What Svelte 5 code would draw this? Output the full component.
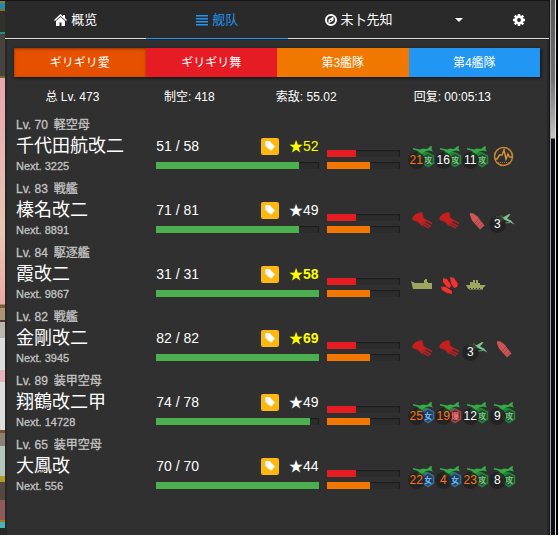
<script>
  const fleets = [
    { name: 'ギリギリ愛', tone: 'orange active' },
    { name: 'ギリギリ舞', tone: 'red' },
    { name: '第3艦隊', tone: 'orange' },
    { name: '第4艦隊', tone: 'blue' },
  ];

  const stats = ['总 Lv. 473', '制空: 418', '索敌: 55.02', '回复: 00:05:13'];

  const attack = (count, full = true) => ({ icon: 'torpedo', mark: '攻', count, full });
  const scout = (count) => ({ icon: 'fighter', mark: '女', count, full: false });
  const bomber = (count) => ({ icon: 'bomber', mark: '爆', count, full: false });

  const ships = [
    {
      level: 70, type: '軽空母', name: '千代田航改二', next: 3225, hp: 51, maxHp: 58,
      cond: 52, glow: 'spark',
      items: [attack(21, false), attack(16), attack(11), { icon: 'sonar' }],
    },
    {
      level: 83, type: '戦艦', name: '榛名改二', next: 8891, hp: 71, maxHp: 81,
      cond: 49, glow: '',
      items: [{ icon: 'gun' }, { icon: 'gun' }, { icon: 'shell' }, { icon: 'seaplane', count: 3, full: true }],
    },
    {
      level: 84, type: '駆逐艦', name: '霞改二', next: 9867, hp: 31, maxHp: 31,
      cond: 58, glow: 'spark strong',
      items: [{ icon: 'boat' }, { icon: 'shells' }, { icon: 'landing' }],
    },
    {
      level: 82, type: '戦艦', name: '金剛改二', next: 3945, hp: 82, maxHp: 82,
      cond: 69, glow: 'spark strong',
      items: [{ icon: 'gun' }, { icon: 'gun' }, { icon: 'seaplane', count: 3, full: true }, { icon: 'shell' }],
    },
    {
      level: 89, type: '装甲空母', name: '翔鶴改二甲', next: 14728, hp: 74, maxHp: 78,
      cond: 49, glow: '',
      items: [scout(25), bomber(19), attack(12), attack(9)],
    },
    {
      level: 65, type: '装甲空母', name: '大鳳改', next: 556, hp: 70, maxHp: 70,
      cond: 44, glow: '',
      items: [scout(22), scout(4), attack(23, false), attack(8)],
    },
  ];

  const fuel = 40;
  const ammo = 60;

  let activeTab = $state('fleet');
</script>

<div class="window">
  <div class="scenery"></div>

  <main>
    <nav>
      <button class:current={activeTab === 'home'} onclick={() => (activeTab = 'home')}>
        <svg width="13" height="12" viewBox="0 0 13 12" aria-hidden="true">
          <path fill="currentColor" d="M6.500 0 0 6l1 1 5.500-5L12 7l1-1-2-2V1H9v1.200zM6.500 3 2 7v5h3.500V8.500h2V12H11V7z" />
        </svg>
        概览
      </button>
      <button class:current={activeTab === 'fleet'} onclick={() => (activeTab = 'fleet')}>
        <svg width="12" height="12" viewBox="0 0 12 12" aria-hidden="true">
          <path fill="currentColor" d="M0 1h12v1.500H0zM0 4h12v1.500H0zM0 7h12v1.500H0zM0 10h12v1.500H0z" />
        </svg>
        舰队
      </button>
      <button class:current={activeTab === 'prophet'} onclick={() => (activeTab = 'prophet')}>
        <svg width="12" height="12" viewBox="0 0 12 12" aria-hidden="true">
          <circle cx="6" cy="6" r="5" fill="none" stroke="currentColor" stroke-width="2" />
          <path fill="currentColor" fill-rule="evenodd" d="M3.500 5.500 8.500 2.500v4L3.500 9.500zM5 6v1.500L7 6z" />
        </svg>
        未卜先知
      </button>
      <button aria-label="More">
        <svg width="8" height="4" viewBox="0 0 8 4" aria-hidden="true"><path fill="currentColor" d="M0 0h8L4 4z" /></svg>
      </button>
      <button aria-label="Settings">
        <svg width="12" height="12" viewBox="0 0 12 12" aria-hidden="true">
          <circle cx="6" cy="6" r="3.300" fill="none" stroke="currentColor" stroke-width="2.800" />
          <path stroke="currentColor" stroke-width="2.400" d="M6 0v2.500M6 9.500V12M0 6h2.500M9.500 6H12M1.700 1.700l1.500 1.500M8.800 8.800l1.500 1.500M1.700 10.300l1.500-1.500M8.800 3.200l1.500-1.500" />
        </svg>
      </button>
    </nav>

    <section class="panel">
      <div class="fleets">
        {#each fleets as fleet}
          <button class={fleet.tone}>{fleet.name}</button>
        {/each}
      </div>

      <div class="stats">
        {#each stats as stat}
          <span>{stat}</span>
        {/each}
      </div>

      {#each ships as ship}
        <div class="ship">
          <div class="info">
            <div class="level"><span>Lv. {ship.level}</span><span>{ship.type}</span></div>
            <span class="name">{ship.name}</span>
            <span class="next">Next. {ship.next}</span>
          </div>

          <div class="health">
            <div class="line">
              <span class="hp">{ship.hp} / {ship.maxHp}</span>
              <button class="tag" aria-label="Tag">
                <svg width="10" height="10" viewBox="0 0 10 10" aria-hidden="true">
                  <path fill="#fff" fill-rule="evenodd" d="M0 1q0-1 1-1h3.500L10 5.500 6 9.700 0 4.500zM2 1.400a.6.600 0 1 0 .1 0z" />
                </svg>
              </button>
              <span class="cond {ship.glow}">★{ship.cond}</span>
            </div>
            <div class="bar"><div class="fill green" style="width: {(ship.hp / ship.maxHp) * 100}%"></div></div>
          </div>

          <div class="supply">
            <div class="bar"><div class="fill red" style="width: {fuel}%"></div></div>
            <div class="bar"><div class="fill orange" style="width: {ammo}%"></div></div>
          </div>

          <div class="items">
            {#each ship.items as item}
              <div class="item {item.icon}">
                <svg width="27" height="27" viewBox="0 0 27 27" aria-hidden="true">
                  {#if item.mark}
                    <path fill="#218c38" d="M9 9l5-1 6 0-2 4-5 2-4-1z" />
                    <path class="hex" d="M20 9l5.500 3v7l-5.500 3.500-5.500-3.500v-7z" />
                    <path fill="#36ac49" d="M5 4l7 1.500 3-1 4 .5 3-2.500 2-.5-.5 3 1.500 2.500-4-1-5 1.500-4 3-4 0 3-3-2-1.500-4-1z" />
                    <text class="mark" x="20" y="19">{item.mark}</text>
                  {:else if item.icon === 'sonar'}
                    <circle cx="14.500" cy="12.500" r="9" fill="none" stroke="#c5852d" stroke-width="1.500" />
                    <path fill="none" stroke="#d59236" stroke-width="1.500" d="M6 15h2l2.500-4 2.500 0 2-5 2 9 2-5 1.500 3h2.500" />
                    <path stroke="#a86f2b" stroke-dasharray="1 1" d="M9 18.500h11" />
                  {:else if item.icon === 'gun'}
                    <path fill="#c5201f" d="M4.500 9.500l3-3.500 6-2 1 1 1 5 3.500 2-5 6-4-4-5.500-2z" />
                    <path fill="none" stroke="#b52021" stroke-width="1.600" d="M13 15.500l8 4.500M15 14l8 4.500M17 12l7 3.500" />
                  {:else if item.icon === 'shell'}
                    <path fill="#cd5558" d="M8 5l3.500.5 4 3 7 9-4.500 4-8-9-2-5z" />
                    <path fill="none" stroke="#903c40" stroke-width=".8" d="M13 15l4-4M15 17l4-4M17 19.500l4-4" />
                  {:else if item.icon === 'seaplane'}
                    <path fill="#42604a" d="M4 9l5 0 3-2 5 4-3 4-6-1z" />
                    <path fill="#82c194" d="M7 8l7 1.500 6-3.500 1.500.5-3.500 4 4 2 3.500 4-6-3-4.500-2-5 2-2-.5 4-3-5-1z" />
                    <path stroke="#639c72" d="M16 15l5-.5" />
                  {:else if item.icon === 'boat'}
                    <path fill="#9da65f" d="M3 9l4 2h9V8h1V7h2v3h1v1h4v6H5z" />
                  {:else if item.icon === 'shells'}
                    <g fill="#fa302d">
                      <path d="M8 6l4 1 4 6-1 3-3-1-4-5z" />
                      <path d="M15 5l4 1 4 6-1 3-3 1-3-5z" />
                      <path d="M6 14.500l5 .5 6 4 0 3-5-1-5-3z" />
                    </g>
                  {:else}
                    <path fill="#9da65f" d="M4 13h4v-3h3V8h2v3h1V8h2v3h2v2h6l-3 3v1.500H7L5 15z" />
                    <path stroke="#303030" stroke-dasharray="1 2" d="M8 16.500h11" />
                  {/if}
                </svg>
                {#if item.count}
                  <span class="count" class:full={item.full}>{item.count}</span>
                {/if}
              </div>
            {/each}
          </div>
        </div>
      {/each}
    </section>
  </main>

  <div class="edge"></div>
</div>

<style>
  :global(body) {
    background: #fff;
  }

  .window {
    display: flex;
    margin-right: 1px;
    background: #2a2a2a;
    color: #fff;
    font-family: 'Liberation Sans', 'Noto Sans CJK SC', sans-serif;
    font-size: 12px;
    line-height: 16px;
  }

  .scenery {
    width: 5px;
    flex: none;
    background: linear-gradient(
      #15151a 0 1px, #938034 1px 3px, #2589ab 3px 9px, #83702b 9px 11px,
      #30302f 11px 32px, #288c83 32px 34px, #47443f 34px 76px, #796928 76px 78px,
      #e6a7ae 78px, #e8b6b0 150px, #eac5b5 230px, #ebaaa2 304px,
      #795c3b 305px 308px, #ad9474 308px 320px, #4e3c32 320px 322px, #bcb7ae 322px 338px,
      #ddd 338px 370px, #e6b2be 370px 382px, #dedede 382px 430px, #77532f 430px 433px,
      #8c8172 433px 446px, #b6c5bd 446px 476px, #b39b27 476px 482px, #54493d 482px 500px,
      #90595a 500px 520px, #a37c22 520px 522px, #4bb1b3 522px 528px, #282828 528px
    );
  }

  .edge {
    width: 8px;
    flex: none;
    box-sizing: border-box;
    border-left: 1px solid #aaa0a4;
    background:
      linear-gradient(90deg, transparent 0 4px, #dedede 4px 5px, #000 5px),
      linear-gradient(#555 0, #707274 80px, #c4c4c4 138px, #0b1117 139px);
  }

  main {
    flex: 1;
    min-width: 0;
    border-top: 1px solid #15151a;
    border-right: 1px solid #151515;
  }

  button {
    border: 0;
    padding: 0;
    background: none;
    color: inherit;
    font: inherit;
    cursor: pointer;
  }

  nav {
    display: grid;
    grid-template-columns: 26fr 26fr 26fr 11fr 11fr;
    margin-bottom: 1px;
  }

  nav button {
    display: flex;
    align-items: center;
    justify-content: center;
    gap: 4px;
    height: 38px;
    border-bottom: 1px solid #ddd;
    font-size: 13px;
  }

  nav .current {
    color: #2196f3;
    border-bottom-color: #2196f3;
  }

  .panel {
    margin: 0 2px;
    padding: 8px 7px 34px;
    background: #303030;
    box-shadow: 0 0 1px 1px #252525;
  }

  .fleets {
    display: grid;
    grid-template-columns: repeat(4, 1fr);
    height: 29px;
    box-shadow: 1px 1px 3px #111;
  }

  .red {
    background: #e51c23;
  }

  .orange {
    background: #f07800;
  }

  .blue {
    background: #2196f3;
  }

  .green {
    background: #4caf50;
  }

  .active {
    background: #e65100;
    box-shadow: inset 0 1px 3px #8d3200;
  }

  .stats {
    display: grid;
    grid-template-columns: 2fr 2fr 2fr 3fr;
    padding: 12px 0;
    text-align: center;
  }

  .ship {
    display: grid;
    grid-template-columns: 132fr 162fr 73fr 132fr;
    column-gap: 8px;
    height: 64px;
    padding-left: 2px;
  }

  .info {
    display: flex;
    flex-direction: column;
    color: #ccc;
    font-family: 'Liberation Sans', 'Noto Sans CJK JP', sans-serif;
    white-space: nowrap;
  }

  .level {
    display: flex;
    gap: 6px;
    -webkit-text-stroke: 0.3px #bbb;
  }

  .name {
    color: #fff;
    font-size: 18px;
    line-height: 26px;
  }

  .next {
    font-size: 11px;
    line-height: 14px;
    -webkit-text-stroke: 0.3px #bbb;
  }

  .health {
    padding-top: 20px;
    font-size: 14px;
  }

  .line {
    display: flex;
    align-items: center;
    height: 18px;
    margin-bottom: 7px;
  }

  .hp {
    flex: 1;
  }

  .tag {
    display: grid;
    place-items: center;
    width: 18px;
    height: 17px;
    border-radius: 2px;
    background: #ffb80f;
  }

  .cond {
    width: 40px;
    text-align: right;
  }

  .spark {
    color: #ff0;
  }

  .strong {
    font-weight: bold;
  }

  .bar {
    height: 7px;
    background: #2c2c2c;
    box-shadow: inset -1px 1px 1px #1c1c1c;
  }

  .fill {
    height: 100%;
  }

  .supply {
    display: flex;
    flex-direction: column;
    gap: 5px;
    padding-top: 33px;
  }

  .items {
    display: flex;
    padding-top: 27px;
  }

  .item {
    position: relative;
    width: 27px;
    height: 27px;
  }

  .hex {
    fill: #2a4633;
    stroke: #25833a;
    stroke-width: 1.5px;
  }

  .mark {
    fill: #70c782;
    font-size: 8px;
    font-weight: bold;
    text-anchor: middle;
  }

  .fighter .hex {
    fill: #243f56;
    stroke: #38699b;
  }

  .fighter .mark {
    fill: #63b5f5;
  }

  .bomber .hex {
    fill: #572e31;
    stroke: #974549;
  }

  .bomber .mark {
    fill: #f37375;
  }

  .count {
    position: absolute;
    left: 0;
    top: 8px;
    width: 17px;
    height: 17px;
    border-radius: 50%;
    background: rgba(32, 32, 32, 0.8);
    color: #ff7314;
    line-height: 17px;
    text-align: center;
  }

  .full {
    color: #fff;
  }
</style>
